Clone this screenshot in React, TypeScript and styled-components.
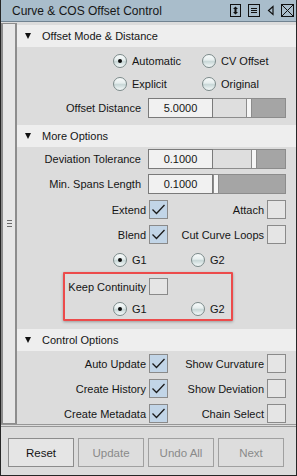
import styled, { createGlobalStyle } from 'styled-components';

const GlobalStyle = createGlobalStyle`
  body {
    margin: 0;
    background: #ffffff;
    font-family: "Liberation Sans", Arial, sans-serif;
    font-size: 11px;
    color: #151515;
  }
`;

const Window = styled.div`
  width: 297px;
  height: 476px;
  box-sizing: border-box;
  border: 1px solid #262626;
  border-top: none;
  display: flex;
  flex-direction: column;
  background: #dcdcdc;
  overflow: hidden;
`;

const TitleBar = styled.div`
  height: 21px;
  flex: none;
  display: flex;
  align-items: center;
  padding: 0 2px 0 11px;
  background: #a9bdcb;
  border-bottom: 1px solid #718391;
`;

const Title = styled.div`
  flex: 1;
  font-size: 12px;
  color: #161616;
`;

const TitleIcons = styled.div`
  display: flex;
  align-items: center;
  gap: 7px;
`;

const Body = styled.div`
  flex: 1;
  display: flex;
  border-bottom: 3px double #979797;
  min-height: 0;
`;

const Rail = styled.div`
  width: 16px;
  box-sizing: border-box;
  margin-top: 1px;
  flex: none;
  display: flex;
  align-items: center;
  justify-content: center;
  background: #e7e7e7;
  border: 2px solid #8d8d8d;
  border-top-width: 1px;
  border-bottom-width: 1px;
`;

const Grip = styled.div`
  width: 5px;
  height: 7px;
  background: repeating-linear-gradient(#6a6a6a 0 1px, transparent 1px 3px);
`;

const Panel = styled.div`
  flex: 1;
  padding-top: 3px;
  overflow: hidden;
`;

const SectionHeader = styled.div`
  height: 22px;
  display: flex;
  align-items: center;
  padding-left: 8px;
  background: #eeeeee;
  font-size: 11px;
`;

const Caret = styled.span`
  width: 0;
  height: 0;
  border-left: 3px solid transparent;
  border-right: 3px solid transparent;
  border-top: 6px solid #111;
  margin-right: 11px;
`;

const SectionBody = styled.div<{ $pad?: number }>`
  padding-top: ${(p) => p.$pad ?? 0}px;
`;

const FieldRow = styled.div<{ $gap?: number }>`
  display: grid;
  grid-template-columns: 124px 65px 73px;
  column-gap: 7px;
  height: 20px;
  align-items: center;
  margin-top: ${(p) => p.$gap ?? 0}px;
  & > label {
    grid-column: 1;
    justify-self: end;
    white-space: nowrap;
  }
`;

const FieldLabel = styled.label``;

const FieldInputWrap = styled.div`
  display: flex;
  height: 20px;
  grid-column: 2 / span 2;
`;

const NumberBox = styled.div`
  width: 65px;
  height: 20px;
  box-sizing: border-box;
  border: 1px solid #7a7a7a;
  background: #f1f1f1;
  display: flex;
  align-items: center;
  justify-content: center;
`;

const SliderTrack = styled.div`
  width: 73px;
  height: 20px;
  box-sizing: border-box;
  border: 1px solid #8c8c8c;
  border-left: none;
  display: flex;
`;

const SliderLight = styled.div<{ $w: number }>`
  width: ${(p) => p.$w}px;
  background: #dedede;
`;

const SliderThumb = styled.div`
  width: 4px;
  background: #f6f6f6;
  border-left: 1px solid #8c8c8c;
  border-right: 1px solid #8c8c8c;
`;

const SliderDark = styled.div`
  flex: 1;
  background: #a5a5a5;
`;

const CheckGrid = styled.div<{ $lead?: number; $h?: number }>`
  display: grid;
  grid-template-columns: ${(p) => p.$lead ?? 129}px 19px 93px 19px;
  column-gap: 3px;
  height: ${(p) => p.$h ?? 25}px;
  align-items: center;
  & > span {
    justify-self: end;
    white-space: nowrap;
  }
`;

const Box = styled.div<{ $on?: boolean; $h?: number }>`
  width: 19px;
  height: ${(p) => p.$h ?? 19}px;
  box-sizing: border-box;
  border: 1px solid #8a8a8a;
  background: ${(p) => (p.$on ? '#c2d5e7' : '#e5e5e5')};
  display: flex;
  align-items: center;
  justify-content: center;
`;

const RadioRow = styled.div<{ $indent: number; $h: number }>`
  display: flex;
  align-items: center;
  height: ${(p) => p.$h}px;
  padding-left: ${(p) => p.$indent}px;
`;

const RadioItem = styled.div<{ $w?: number }>`
  display: flex;
  align-items: center;
  width: ${(p) => (p.$w ? `${p.$w}px` : 'auto')};
  white-space: nowrap;
`;

const RadioDot = styled.span<{ $on?: boolean }>`
  width: 14px;
  height: 14px;
  box-sizing: border-box;
  border-radius: 50%;
  border: 1px solid #7b8a8a;
  margin-right: 5px;
  flex: none;
  display: flex;
  align-items: center;
  justify-content: center;
  background: linear-gradient(180deg, #f8fbfb 0%, #e6eeee 42%, #c8d7d7 55%, #e6eeee 85%, #f2f6f6 100%);
  &::after {
    content: '';
    width: 4px;
    height: 4px;
    border-radius: 50%;
    background: ${(p) => (p.$on ? '#0c0c0c' : 'transparent')};
  }
`;

const Highlight = styled.div`
  margin: 0 0 8px 46px;
  width: 170px;
  height: 49px;
  box-sizing: border-box;
  border: 2px solid #ec4b4b;
  border-radius: 1px;
  box-shadow: 0 1px 3px rgba(0, 0, 0, 0.3);
`;

const ButtonBar = styled.div`
  height: 48px;
  flex: none;
  box-sizing: border-box;
  padding: 11px 0 0 7px;
  display: flex;
  gap: 4px;
`;

const Button = styled.button<{ $off?: boolean }>`
  width: 66px;
  height: 29px;
  box-sizing: border-box;
  font-family: "Liberation Sans", Arial, sans-serif;
  font-size: 11.5px;
  border: 1px solid ${(p) => (p.$off ? '#a0a0a0' : '#8c8c8c')};
  background: ${(p) => (p.$off ? '#dddddd' : '#e5e5e5')};
  color: ${(p) => (p.$off ? '#8a8a8a' : '#141414')};
  padding: 0;
  border-radius: 0;
`;

const Check = ({ on, h }: { on?: boolean; h?: number }) => (
  <Box $on={on} $h={h}>
    {on && (
      <svg width="15" height="13" viewBox="0 0 15 13">
        <polyline points="1.5,6.5 5.5,10.5 13.5,2" fill="none" stroke="#1b1b1b" strokeWidth="1.3" />
      </svg>
    )}
  </Box>
);

const Radio = ({ label, on, w }: { label: string; on?: boolean; w?: number }) => (
  <RadioItem $w={w}>
    <RadioDot $on={on} />
    {label}
  </RadioItem>
);

const Field = ({ label, value, pos, gap }: { label: string; value: string; pos: number; gap?: number }) => (
  <FieldRow $gap={gap}>
    <FieldLabel>{label}</FieldLabel>
    <FieldInputWrap>
      <NumberBox>{value}</NumberBox>
      <SliderTrack>
        <SliderLight $w={pos} />
        <SliderThumb />
        <SliderDark />
      </SliderTrack>
    </FieldInputWrap>
  </FieldRow>
);

const CheckRow = ({ a, aOn, b, bOn }: { a: string; aOn?: boolean; b: string; bOn?: boolean }) => (
  <CheckGrid>
    <span>{a}</span>
    <Check on={aOn} />
    <span>{b}</span>
    <Check on={bOn} />
  </CheckGrid>
);

const Section = ({ title, children, pad }: { title: string; children: React.ReactNode; pad?: number }) => (
  <>
    <SectionHeader>
      <Caret />
      {title}
    </SectionHeader>
    <SectionBody $pad={pad}>{children}</SectionBody>
  </>
);

function App() {
  return (
    <>
      <GlobalStyle />
      <Window>
        <TitleBar>
          <Title>Curve &amp; COS Offset Control</Title>
          <TitleIcons>
            <svg width="11" height="13" viewBox="0 0 11 13">
              <rect x="0.5" y="0.5" width="10" height="12" fill="none" stroke="#111" />
              <path d="M5.5 2.5 L3 5 H8 Z M5.5 10.5 L3 8 H8 Z" fill="#111" />
              <rect x="4.5" y="4" width="2" height="5" fill="#111" />
            </svg>
            <svg width="12" height="13" viewBox="0 0 12 13">
              <rect x="0.5" y="0.5" width="11" height="12" fill="none" stroke="#111" />
              <path d="M3 4.5 H9 M3 6.5 H9 M3 8.5 H9" stroke="#111" />
            </svg>
            <svg width="7" height="13" viewBox="0 0 7 13">
              <path d="M6 2.5 L1.5 6.5 L6 10.5 Z" fill="none" stroke="#111" strokeWidth="1.2" />
            </svg>
            <svg width="13" height="13" viewBox="0 0 13 13">
              <rect x="0.5" y="0.5" width="12" height="12" fill="none" stroke="#111" />
              <path d="M1 1 L12 12 M12 1 L1 12" stroke="#111" />
            </svg>
          </TitleIcons>
        </TitleBar>
        <Body>
          <Rail>
            <Grip />
          </Rail>
          <Panel>
            <Section title="Offset Mode & Distance" pad={2}>
              <RadioRow $indent={96} $h={23}>
                <Radio label="Automatic" on w={89} />
                <Radio label="CV Offset" />
              </RadioRow>
              <RadioRow $indent={96} $h={23}>
                <Radio label="Explicit" w={89} />
                <Radio label="Original" />
              </RadioRow>
              <Field label="Offset Distance" value="5.0000" pos={33} gap={3} />
              <div style={{ height: 7 }} />
            </Section>
            <Section title="More Options" pad={2}>
              <Field label="Deviation Tolerance" value="0.1000" pos={38} />
              <Field label="Min. Spans Length" value="0.1000" pos={0} gap={5} />
              <div style={{ height: 3 }} />
              <CheckRow a="Extend" aOn b="Attach" />
              <CheckRow a="Blend" aOn b="Cut Curve Loops" />
              <RadioRow $indent={96} $h={25}>
                <Radio label="G1" on w={78} />
                <Radio label="G2" />
              </RadioRow>
              <Highlight>
                <CheckGrid $lead={81}>
                  <span>Keep Continuity</span>
                  <Check h={17} />
                </CheckGrid>
                <RadioRow $indent={48} $h={20}>
                  <Radio label="G1" on w={78} />
                  <Radio label="G2" />
                </RadioRow>
              </Highlight>
            </Section>
            <Section title="Control Options">
              <CheckRow a="Auto Update" aOn b="Show Curvature" />
              <CheckRow a="Create History" aOn b="Show Deviation" />
              <CheckRow a="Create Metadata" aOn b="Chain Select" />
            </Section>
          </Panel>
        </Body>
        <ButtonBar>
          <Button>Reset</Button>
          <Button $off>Update</Button>
          <Button $off>Undo All</Button>
          <Button $off>Next</Button>
        </ButtonBar>
      </Window>
    </>
  );
}

export default App;
